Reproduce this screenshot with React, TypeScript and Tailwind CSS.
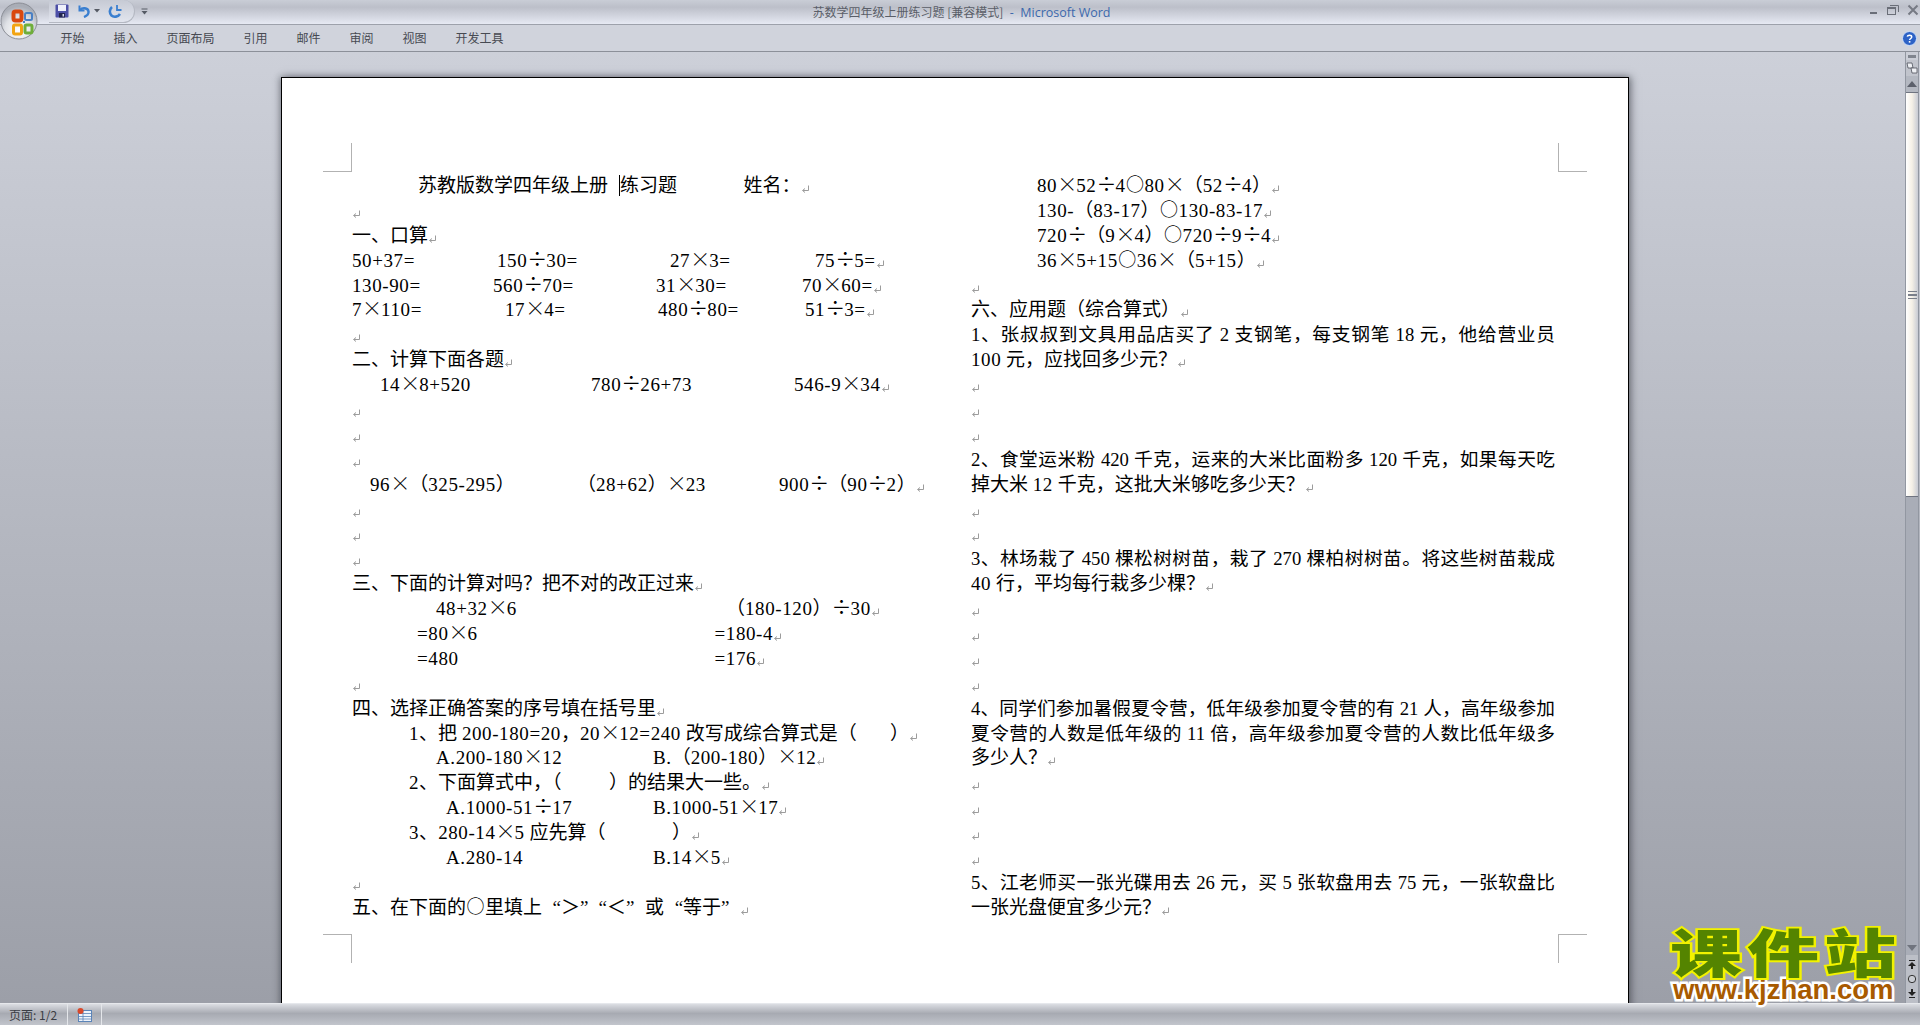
import React from "react";

const serif = "[font-family:'Liberation_Serif','Noto_Sans_CJK_SC',serif]";
const ui = "[font-family:'Noto_Sans_CJK_SC','Noto_Sans',sans-serif]";

// paragraph mark
function Mark() {
  return (
    <svg width="9" height="10" viewBox="0 0 9 10" className="inline-block align-[-2px]" fill="none" stroke="#9c9c9c" strokeWidth="1">
      <path d="M7.5 1.5V6.5H2" />
      <path d="M4 4.5L1.5 6.5L4 8.5" />
    </svg>
  );
}

// word's simsun draws these full width, so they get a cell of one em
function Math({ children }: { children: string }) {
  const parts = children.split(/(”“|[×÷○“”]|[0-9A-Za-z+=.-]+)/);
  return (
    <>
      {parts.map((p, i) => {
        if (p === "") return null;
        if (p === "×") return <span key={i} className="inline-block w-[19px] text-center [font-family:'Noto_Sans_CJK_SC'] font-light text-[20px] leading-[0px]">×</span>;
        if (p === "÷") return <span key={i} className="inline-block w-[19px] text-center [font-family:'Noto_Sans_CJK_SC'] text-[20px] leading-[0px]">÷</span>;
        if (p === "○") return <span key={i} className="inline-block w-[19px] text-center [font-family:'Noto_Sans_CJK_SC'] text-[18px] leading-[0px] align-[1px]">○</span>;
        if (p === "“") return <span key={i} className="inline-block w-[19px] text-right leading-[0px]">“</span>;
        if (p === "”") return <span key={i} className="inline-block w-[19px] text-left leading-[0px]">”</span>;
        if (p === "”“")
          return (
            <React.Fragment key={i}>
              <span className="inline-block w-[15px] text-left leading-[0px]">”</span>
              <span className="inline-block w-[12px] text-right leading-[0px]">“</span>
            </React.Fragment>
          );
        if (/^[0-9A-Za-z+=.-]+$/.test(p)) return <span key={i} className="tracking-[0.6px]">{p}</span>;
        return <React.Fragment key={i}>{p}</React.Fragment>;
      })}
    </>
  );
}

function Row({ className = "", children }: { className?: string; children?: React.ReactNode }) {
  return <div className={`flex h-[24.9px] leading-[24.9px] whitespace-nowrap ${className}`}>{children}</div>;
}

function C({ className = "", children }: { className?: string; children: string }) {
  return <div className={`shrink-0 ${className}`}><Math>{children}</Math></div>;
}

function End({ className = "", children }: { className?: string; children: string }) {
  return <div className={`shrink-0 ${className}`}><Math>{children}</Math><Mark /></div>;
}

const Blank = () => <Row><div><Mark /></div></Row>;

function Wide({ children }: { children: string }) {
  return <div className="h-[24.9px] leading-[24.9px] text-[18.7px] text-justify [text-align-last:justify]">{children}</div>;
}

function LeftColumn() {
  return (
    <div className="w-[619px] shrink-0">
      <Row className="pl-[66px]">
        <div className="w-[201px] shrink-0">苏教版数学四年级上册</div>
        <div className="w-[124.5px] shrink-0"><span className="border-l-[1.5px] border-black">练习题</span></div>
        <End>姓名：</End>
      </Row>
      <Blank />
      <Row><End>一、口算</End></Row>
      <Row>
        <C className="w-[145px]">50+37=</C><C className="w-[173px]">150÷30=</C><C className="w-[145px]">27×3=</C><End>75÷5=</End>
      </Row>
      <Row>
        <C className="w-[141px]">130-90=</C><C className="w-[163px]">560÷70=</C><C className="w-[146px]">31×30=</C><End>70×60=</End>
      </Row>
      <Row>
        <C className="w-[153px]">7×110=</C><C className="w-[153px]">17×4=</C><C className="w-[147px]">480÷80=</C><End>51÷3=</End>
      </Row>
      <Blank />
      <Row><End>二、计算下面各题</End></Row>
      <Row className="pl-[28px]">
        <C className="w-[211px]">14×8+520</C><C className="w-[203px]">780÷26+73</C><End>546-9×34</End>
      </Row>
      <Blank />
      <Blank />
      <Blank />
      <Row className="pl-[18px]">
        <C className="w-[207px]">96×（325-295）</C><C className="w-[202px]">（28+62）×23</C><End>900÷（90÷2）</End>
      </Row>
      <Blank />
      <Blank />
      <Blank />
      <Row><End>三、下面的计算对吗？把不对的改正过来</End></Row>
      <Row className="pl-[84px]">
        <C className="w-[290px]">48+32×6</C><End>（180-120）÷30</End>
      </Row>
      <Row className="pl-[65px]">
        <C className="w-[297.5px]">=80×6</C><End>=180-4</End>
      </Row>
      <Row className="pl-[65px]">
        <C className="w-[297.5px]">=480</C><End>=176</End>
      </Row>
      <Blank />
      <Row><End>四、选择正确答案的序号填在括号里</End></Row>
      <Row className="pl-[57px]"><End>1、把 200-180=20，20×12=240 改写成综合算式是（&#160;&#160;&#160;&#160;&#160;&#160;&#160;）</End></Row>
      <Row className="pl-[84px]">
        <C className="w-[217px]">A.200-180×12</C><End>B.（200-180）×12</End>
      </Row>
      <Row className="pl-[57px]"><End>2、下面算式中，（&#160;&#160;&#160;&#160;&#160;&#160;&#160;&#160;&#160;&#160;）的结果大一些。</End></Row>
      <Row className="pl-[94px]">
        <C className="w-[207px]">A.1000-51÷17</C><End>B.1000-51×17</End>
      </Row>
      <Row className="pl-[57px]"><End>3、280-14×5 应先算（&#160;&#160;&#160;&#160;&#160;&#160;&#160;&#160;&#160;&#160;&#160;&#160;&#160;&#160;）</End></Row>
      <Row className="pl-[94px]">
        <C className="w-[207px]">A.280-14</C><End>B.14×5</End>
      </Row>
      <Blank />
      <Row><End>五、在下面的○里填上“＞”“＜”或“等于”</End></Row>
    </div>
  );
}

function RightColumn() {
  return (
    <div className="w-[584px] shrink-0">
      <Row className="pl-[66px]"><End>80×52÷4○80×（52÷4）</End></Row>
      <Row className="pl-[66px]"><End>130-（83-17）○130-83-17</End></Row>
      <Row className="pl-[66px]"><End>720÷（9×4）○720÷9÷4</End></Row>
      <Row className="pl-[66px]"><End>36×5+15○36×（5+15）</End></Row>
      <Blank />
      <Row><End>六、应用题（综合算式）</End></Row>
      <Wide>1、张叔叔到文具用品店买了 2 支钢笔，每支钢笔 18 元，他给营业员</Wide>
      <Row><End>100 元，应找回多少元？</End></Row>
      <Blank />
      <Blank />
      <Blank />
      <Wide>2、食堂运米粉 420 千克，运来的大米比面粉多 120 千克，如果每天吃</Wide>
      <Row><End>掉大米 12 千克，这批大米够吃多少天？</End></Row>
      <Blank />
      <Blank />
      <Wide>3、林场栽了 450 棵松树树苗，栽了 270 棵柏树树苗。将这些树苗栽成</Wide>
      <Row><End>40 行，平均每行栽多少棵？</End></Row>
      <Blank />
      <Blank />
      <Blank />
      <Blank />
      <Wide>4、同学们参加暑假夏令营，低年级参加夏令营的有 21 人，高年级参加</Wide>
      <Wide>夏令营的人数是低年级的 11 倍，高年级参加夏令营的人数比低年级多</Wide>
      <Row><End>多少人？</End></Row>
      <Blank />
      <Blank />
      <Blank />
      <Blank />
      <Wide>5、江老师买一张光碟用去 26 元，买 5 张软盘用去 75 元，一张软盘比</Wide>
      <Row><End>一张光盘便宜多少元？</End></Row>
    </div>
  );
}

function OfficeButton() {
  return (
    <svg width="38" height="38" viewBox="0 0 38 38" className="absolute left-[0px] top-[2px]">
      <defs>
        <radialGradient id="orb" cx="50%" cy="75%" r="65%">
          <stop offset="0%" stopColor="#ffffff" />
          <stop offset="60%" stopColor="#dfe1e6" />
          <stop offset="100%" stopColor="#a9adb6" />
        </radialGradient>
      </defs>
      <circle cx="19" cy="19" r="18" fill="url(#orb)" stroke="#8c8f97" strokeWidth="1" />
      <rect x="13.5" y="9.5" width="8" height="9" rx="2" fill="none" stroke="#d9480f" strokeWidth="4" />
      <rect x="25" y="11" width="7" height="7" rx="1.5" fill="none" stroke="#4a80c4" strokeWidth="2" />
      <rect x="13.5" y="23" width="8" height="9" rx="1.5" fill="none" stroke="#f2a412" strokeWidth="3" />
      <rect x="25" y="23" width="7" height="8" rx="1.5" fill="none" stroke="#6fae3a" strokeWidth="3" />
      <rect x="23" y="19" width="2" height="2" fill="#4a80c4" />
    </svg>
  );
}

function QuickAccess() {
  return (
    <div className="flex items-start">
      <div className="flex items-center shrink-0 h-[23px] w-[86px] ml-[49px] pl-[6px] rounded-r-[12px] border-r border-b border-[#b4b8c2] bg-linear-to-b from-[#c6cad4] to-[#e2e5ee]">
        <svg width="14" height="14" viewBox="0 0 14 14" className="shrink-0">
          <rect x="0.5" y="0.5" width="13" height="13" rx="1" fill="#4c4fa6" />
          <rect x="3" y="1" width="8" height="6" fill="#eef0fa" />
          <rect x="4" y="9" width="6" height="4.5" fill="#23254f" />
          <rect x="7.5" y="10" width="1.5" height="2.5" fill="#d5d7ea" />
        </svg>
        <svg width="14" height="14" viewBox="0 0 14 14" className="ml-[8px] shrink-0" fill="none">
          <path d="M2.5 1.5V6.5H7.5" stroke="#3a7fd0" strokeWidth="2" />
          <path d="M3 6C5 3.5 11 3.5 11.5 7.5C11.8 10 9.5 12 7 13" stroke="#3a7fd0" strokeWidth="2.4" />
        </svg>
        <svg width="6" height="4" viewBox="0 0 6 4" className="ml-[3px] shrink-0"><path d="M0 0H6L3 3.5Z" fill="#555a64" /></svg>
        <svg width="14" height="14" viewBox="0 0 14 14" className="ml-[8px] shrink-0" fill="none">
          <path d="M9 1V6H13.5" stroke="#3a7fd0" strokeWidth="1.8" />
          <path d="M4 3C1.5 5 1 9 3.5 11.5C6 13.5 10 13 12 10" stroke="#3a7fd0" strokeWidth="2.6" />
        </svg>
      </div>
      <svg width="7" height="7" viewBox="0 0 7 7" className="ml-[6px] mt-[8px] shrink-0"><path d="M0.5 1H6.5" stroke="#555a64" /><path d="M0.5 3H6.5L3.5 6.5Z" fill="#555a64" /></svg>
    </div>
  );
}

function WindowButtons() {
  return (
    <div className="flex items-start justify-end gap-[8px] pr-[1px] pt-[4px]">
      <svg width="12" height="12" viewBox="0 0 12 12" className="mt-[1px]"><rect x="3" y="7" width="7" height="2" fill="#6a6e78" /></svg>
      <svg width="12" height="12" viewBox="0 0 12 12" fill="none" stroke="#6a6e78"><rect x="0.5" y="3.5" width="8" height="7" /><path d="M3 1.5H11.5V8" /><path d="M0.5 4.5H8.5" /></svg>
      <svg width="12" height="12" viewBox="0 0 12 12" fill="none" stroke="#767a84" strokeWidth="2"><path d="M1.5 1.5L10.5 10.5M10.5 1.5L1.5 10.5" /></svg>
    </div>
  );
}

function Help() {
  return (
    <svg width="15" height="15" viewBox="0 0 15 15">
      <circle cx="7.5" cy="7.5" r="7" fill="#2d62c6" stroke="#cfe0fa" strokeWidth="1" />
      <path d="M5.3 5.6C5.5 3.9 9.6 3.7 9.7 5.9C9.8 7.4 7.7 7.5 7.6 9" fill="none" stroke="#fff" strokeWidth="1.5" />
      <rect x="6.8" y="10" width="1.6" height="1.6" fill="#fff" />
    </svg>
  );
}

function Scrollbar() {
  return (
    <div className="w-[14px] mr-[1px] shrink-0 flex flex-col items-stretch bg-[#a9adb7] border-x border-[#9297a1]">
      <div className="h-[8px] flex justify-center pt-[3px] bg-[#cbced7]"><div className="w-[8px] h-[3px] bg-[#80858f]" /></div>
      <div className="h-[16px] flex items-center justify-center bg-[#c1c4cc]">
        <svg width="12" height="12" viewBox="0 0 12 12" fill="#eef0f4" stroke="#4e525c" strokeWidth="0.8"><path d="M1 1H6L7 6H2Z" /><path d="M5 6H11V11H6Z" /></svg>
      </div>
      <div className="h-[16px] flex items-center justify-center bg-[#b4b8c1]">
        <svg width="10" height="6" viewBox="0 0 10 6"><path d="M0 6L5 0L10 6Z" fill="#5c606b" /></svg>
      </div>
      <div className="h-[405px] flex flex-col items-center pt-[198px] border-y border-[#6f7480] bg-linear-to-r from-[#ffffff] via-[#f5f0e6] to-[#c8cbd4]">
        <div className="w-[9px] h-[8px] border-y border-[#7a7f8a] flex items-center"><div className="w-full h-[2px] border-y border-[#7a7f8a]" /></div>
      </div>
      <div className="flex-1" />
      <div className="h-[14px] flex items-center justify-center">
        <svg width="10" height="6" viewBox="0 0 10 6"><path d="M0 0L5 6L10 0Z" fill="#70747e" /></svg>
      </div>
      <div className="h-[48px] bg-[#bcbfc7] flex flex-col items-center justify-around py-[3px]">
        <svg width="10" height="10" viewBox="0 0 10 10" fill="#222"><path d="M2 0H8V1H2ZM5 2L9 6H6V9H4V6H1Z" /></svg>
        <svg width="10" height="10" viewBox="0 0 10 10"><circle cx="5" cy="5" r="3.7" fill="#c9ccd2" stroke="#333" /></svg>
        <svg width="10" height="10" viewBox="0 0 10 10" fill="#222"><path d="M2 9H8V10H2ZM5 8L9 4H6V1H4V4H1Z" /></svg>
      </div>
    </div>
  );
}

function CropMarks({ flip }: { flip: boolean }) {
  const left = flip ? "border-r border-t" : "border-r border-b";
  const right = flip ? "border-l border-t" : "border-l border-b";
  return (
    <div className="flex justify-between mx-[41px]">
      <div className={`w-[29px] h-[29px] border-[#b2b2b2] ${left}`} />
      <div className={`w-[29px] h-[29px] border-[#b2b2b2] ${right}`} />
    </div>
  );
}

export default function App() {
  return (
    <div lang="zh-CN" className="relative w-[1920px] h-[1025px] flex flex-col overflow-hidden bg-[#cbced7]">
      {/* title bar */}
      <div className={`h-[25px] shrink-0 grid grid-cols-[1fr_auto_1fr] border-b border-[#9da1ab] bg-linear-to-b from-[#c9cdd6] via-[#bcbfc9] via-30% to-[#e6e9f3] ${ui}`}>
        <QuickAccess />
        <div className="text-[12px] leading-[24px] pl-[3px] text-[#5a5e68] whitespace-pre">
          苏数学四年级上册练习题 [兼容模式]<span className="text-[#3c69ad] text-[12.5px] [font-family:'Open_Sans',sans-serif]">  -  Microsoft Word</span>
        </div>
        <WindowButtons />
      </div>

      {/* ribbon tabs */}
      <div className={`h-[27px] shrink-0 flex items-center justify-between pl-[60.5px] pr-[3px] border-b border-[#8c9099] bg-[#d0d3dc] text-[12px] text-[#474a52] ${ui}`}>
        <div className="flex gap-[29px]">
          {["开始", "插入", "页面布局", "引用", "邮件", "审阅", "视图", "开发工具"].map((t) => (
            <span key={t}>{t}</span>
          ))}
        </div>
        <Help />
      </div>

      <OfficeButton />

      {/* document */}
      <div className="flex-1 min-h-0 flex bg-linear-to-b from-[#cdd0d9] to-[#9c9fa8]">
        <div className="flex-1 min-w-0 pl-[281px] pt-[25px] overflow-hidden">
          <div className={`w-[1348px] h-[1000px] bg-white border border-black shadow-[2px_0_8px_rgba(40,44,52,0.55),-2px_0_6px_rgba(40,44,52,0.25)] text-[19px] text-black pt-[65px] ${serif}`}>
            <CropMarks flip={false} />
            <div className="flex px-[70px] pt-[2px]">
              <LeftColumn />
              <RightColumn />
            </div>
            <div className="mt-[13px]">
              <CropMarks flip={true} />
            </div>
          </div>
        </div>
        <Scrollbar />
      </div>

      {/* status bar */}
      <div className={`h-[22px] shrink-0 flex items-stretch border-t border-[#e6e8ec] bg-linear-to-b from-[#dcdee3] via-[#a7aab2] via-45% to-[#c2c5cc] text-[12px] text-[#3a3d44] ${ui}`}>
        <div className="w-[68px] pl-[9px] leading-[21px] border-r border-[#e4e6ea]">页面: 1/2</div>
        <div className="w-[34px] flex items-center justify-center border-r border-[#e4e6ea]">
          <svg width="15" height="14" viewBox="0 0 15 14">
            <rect x="1.5" y="2.5" width="13" height="11" fill="#eef3fb" stroke="#5b84b8" />
            <path d="M1.5 5.5H14.5M1.5 8.5H14.5M1.5 11H14.5M6 3V13" stroke="#5b84b8" strokeWidth="0.8" />
            <circle cx="3.5" cy="3" r="3" fill="#d9482a" />
          </svg>
        </div>
      </div>

      {/* site watermark */}
      <div className="absolute left-[1670px] top-[925px] w-[228px] pointer-events-none">
        <div className="h-[52px] text-[72px] leading-[72px] font-black tracking-[5px] whitespace-nowrap origin-top scale-y-[0.72] text-[#548400] [-webkit-text-stroke:5px_#f2f200] [paint-order:stroke_fill] [font-family:'Noto_Sans_CJK_SC',sans-serif]">课件站</div>
        <div className="text-[27.5px] leading-[26px] font-bold whitespace-nowrap pl-[3px] text-[#a85a00] [-webkit-text-stroke:5px_#ffffff] [paint-order:stroke_fill] [font-family:'Liberation_Sans',sans-serif]">www.kjzhan.com</div>
      </div>
    </div>
  );
}
